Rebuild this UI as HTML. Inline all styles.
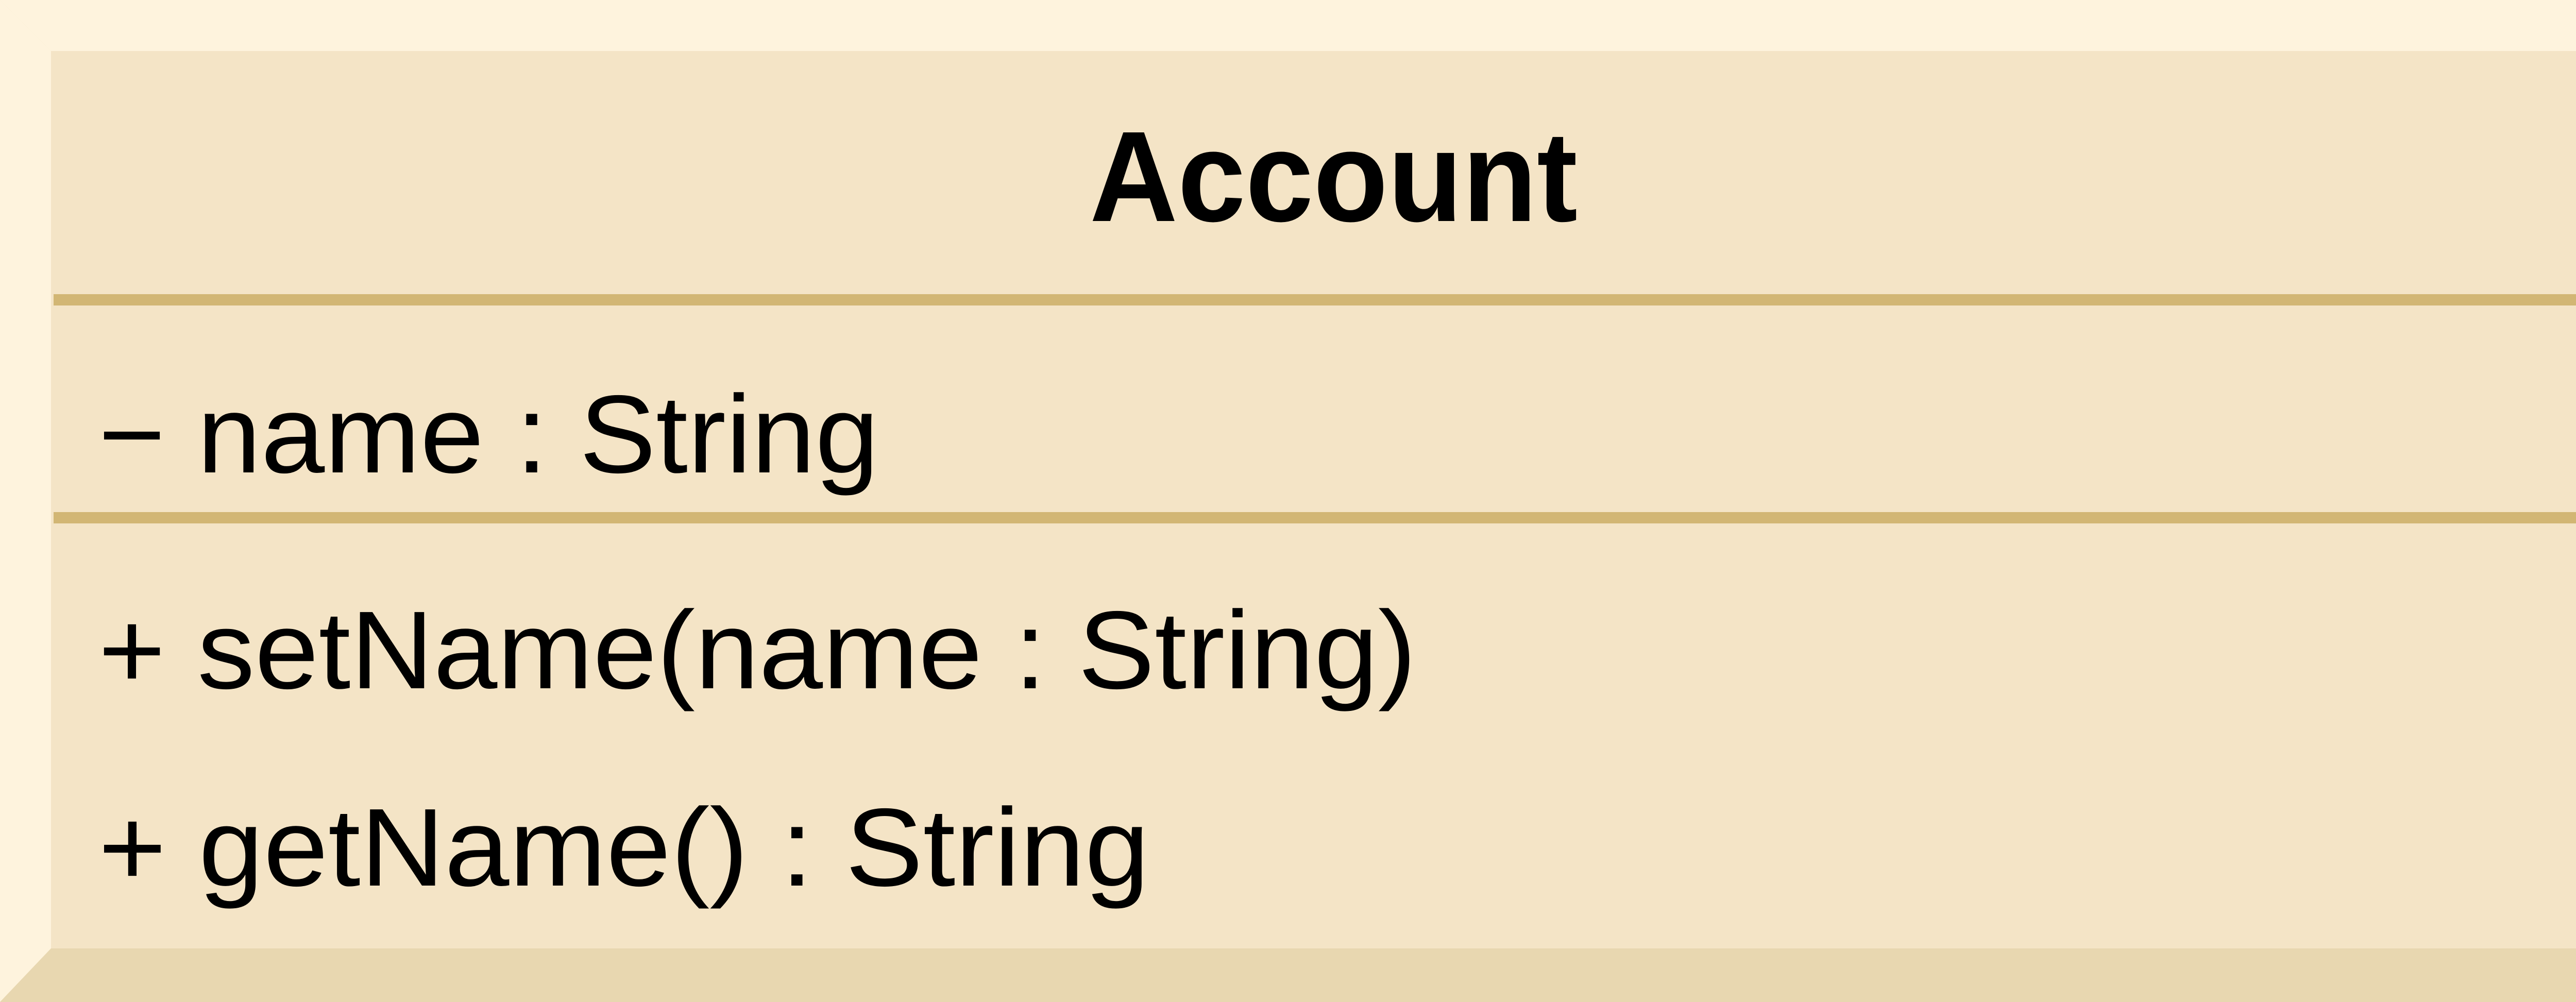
<!DOCTYPE html>
<html><head><meta charset="utf-8"><style>
html,body{margin:0;padding:0;background:#F4E4C6;width:5174px;height:1945px;overflow:hidden;}
svg{display:block;position:absolute;left:0;top:0}
text{font-family:"Liberation Sans",sans-serif;fill:#000}
</style></head><body>
<svg width="5174" height="1945" viewBox="0 0 5174 1945" xmlns="http://www.w3.org/2000/svg">
<rect x="0" y="0" width="5174" height="1945" fill="#F4E4C6"/>
<polygon points="0,0 5174,0 5073,99 99,99" fill="#FEF3DD"/>
<polygon points="0,0 99,99 99,1841 0,1945" fill="#FEF3DD"/>
<polygon points="5174,0 5174,1945 5073,1841 5073,99" fill="#E8D7B0"/>
<polygon points="0,1945 99,1841 5073,1841 5174,1945" fill="#E8D7B0"/>
<rect x="104" y="571" width="4969" height="22" fill="#D2B674"/>
<rect x="104" y="994" width="4969" height="22" fill="#D2B674"/>
<text x="2115" y="429" font-size="250" font-weight="bold" textLength="947" lengthAdjust="spacingAndGlyphs">Account</text>
<text x="191" y="917" font-size="215" textLength="1515" lengthAdjust="spacingAndGlyphs">− name : String</text>
<text x="191" y="1336" font-size="215" textLength="2558" lengthAdjust="spacingAndGlyphs">+ setName(name : String)</text>
<text x="191" y="1719" font-size="215" textLength="2040" lengthAdjust="spacingAndGlyphs">+ getName() : String</text>
</svg>
</body></html>
